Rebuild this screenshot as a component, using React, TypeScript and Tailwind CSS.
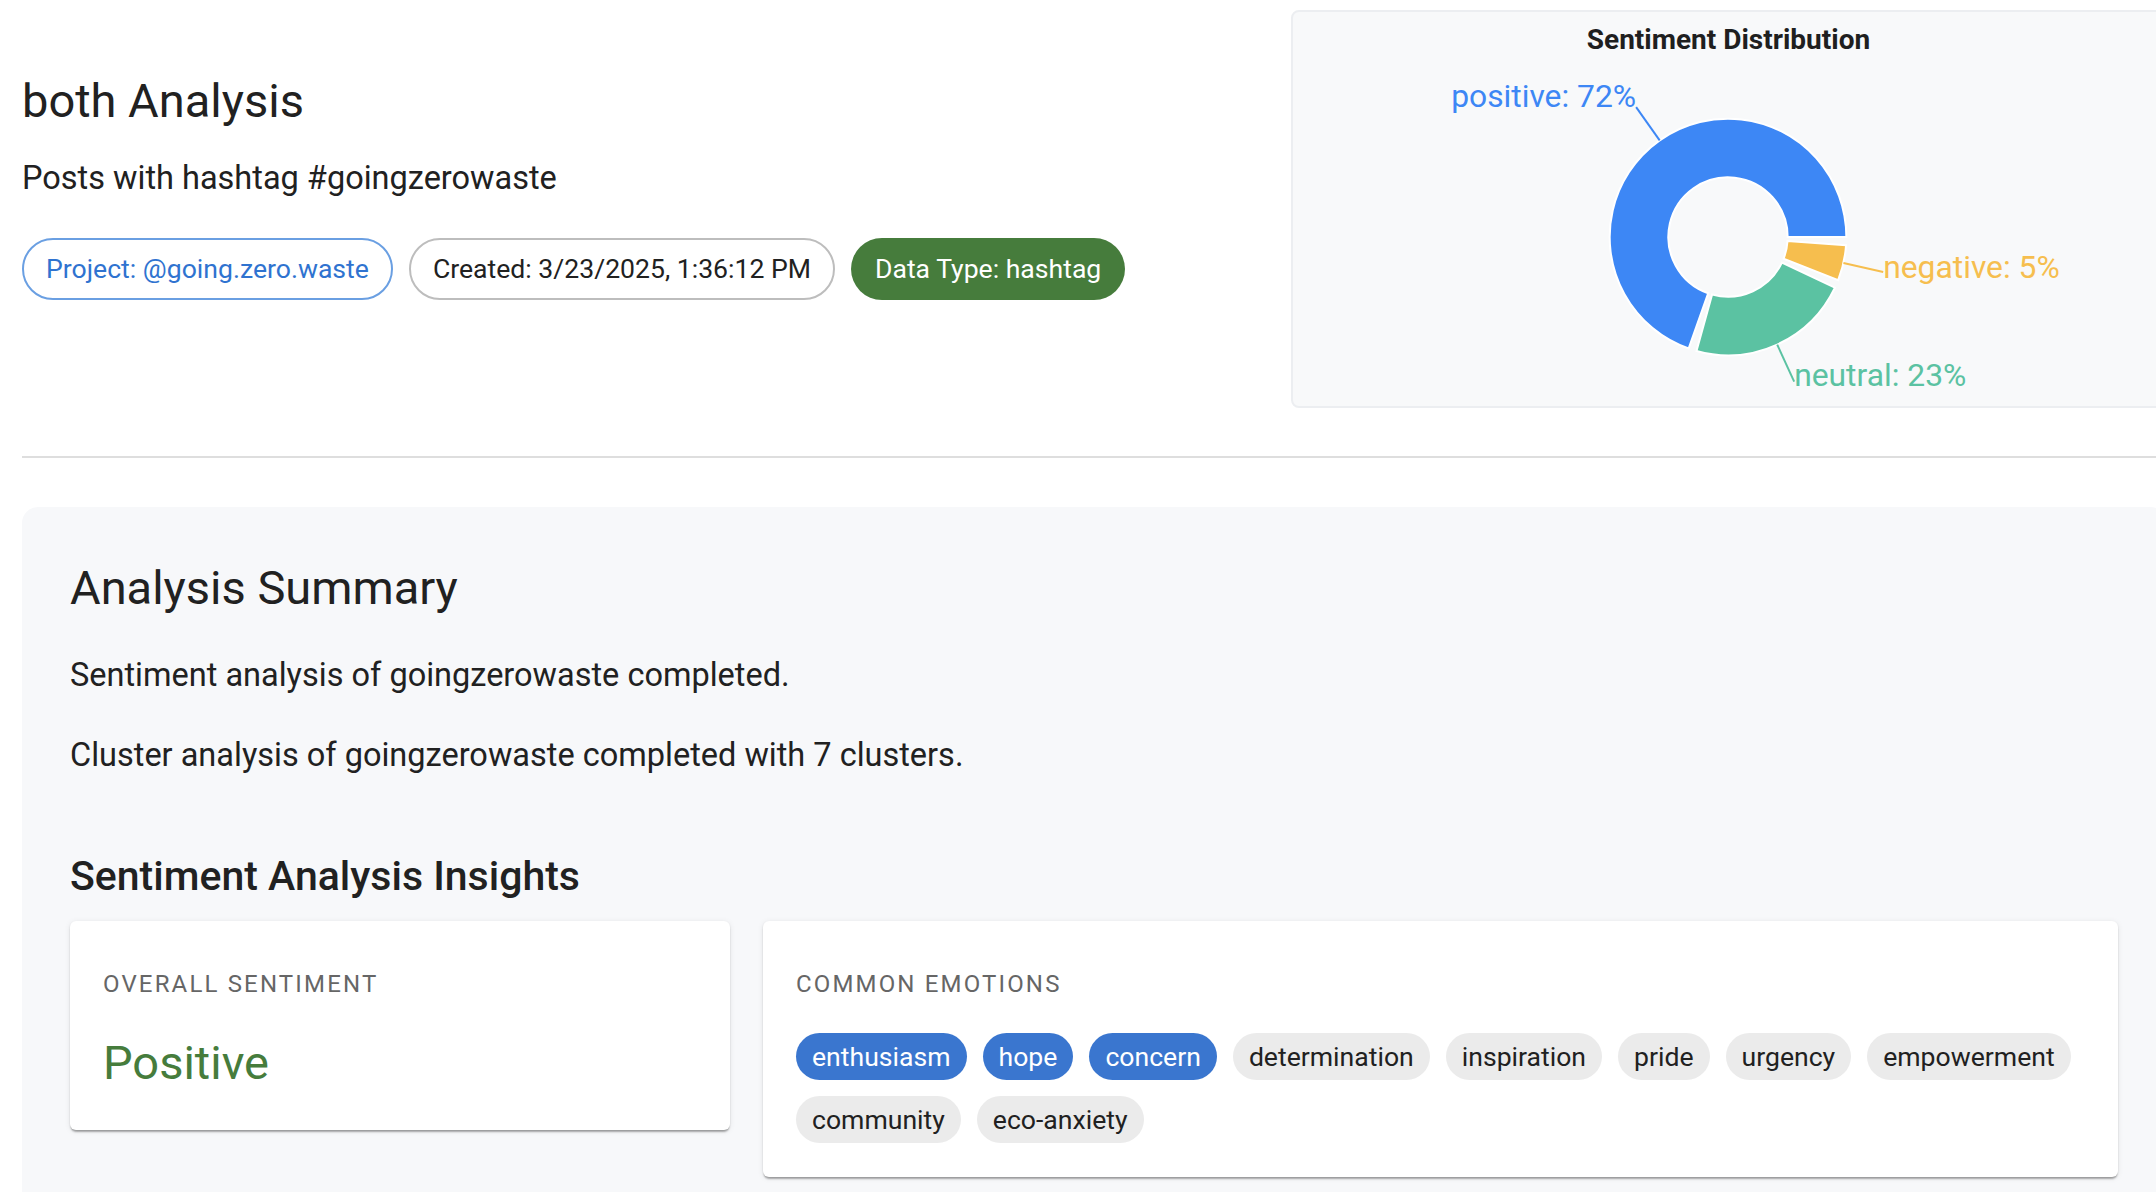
import React from 'react';

const data = [
  { name: 'positive', value: 72, color: '#3d87f5', dy: -11 },
  { name: 'neutral', value: 23, color: '#5bc2a2', dy: -7 },
  { name: 'negative', value: 5, color: '#f6be4e', dy: -5 },
];

const emotions = [
  { label: 'enthusiasm', top: true },
  { label: 'hope', top: true },
  { label: 'concern', top: true },
  { label: 'determination' },
  { label: 'inspiration' },
  { label: 'pride' },
  { label: 'urgency' },
  { label: 'empowerment' },
  { label: 'community' },
  { label: 'eco-anxiety' },
];

const CX = 437;
const CY = 180;
const OUTER = 119;
const INNER = 60;
const PAD = 4;

function pt(r: number, deg: number) {
  const a = (deg * Math.PI) / 180;
  return { x: CX + r * Math.cos(a), y: CY - r * Math.sin(a) };
}

function sectorPath(a1: number, a2: number) {
  const large = a2 - a1 > 180 ? 1 : 0;
  const o1 = pt(OUTER, a1);
  const o2 = pt(OUTER, a2);
  const i1 = pt(INNER, a1);
  const i2 = pt(INNER, a2);
  return `M${o1.x},${o1.y} A${OUTER},${OUTER} 0 ${large} 0 ${o2.x},${o2.y} L${i2.x},${i2.y} A${INNER},${INNER} 0 ${large} 1 ${i1.x},${i1.y} Z`;
}

function Donut() {
  const total = data.reduce((s, d) => s + d.value, 0);
  const usable = 360 - data.length * PAD;
  let start = 0;
  const sectors = data.map((d) => {
    const sweep = (d.value / total) * usable;
    const s = { ...d, a1: start, a2: start + sweep, mid: start + sweep / 2 };
    start += sweep + PAD;
    return s;
  });

  return (
    <svg width="875" height="350" viewBox="0 0 875 350">
      {sectors.map((s) => (
        <path key={s.name} d={sectorPath(s.a1, s.a2)} fill={s.color} stroke="#ffffff" strokeWidth={2} />
      ))}
      {sectors.map((s) => {
        const p1 = pt(OUTER, s.mid);
        const p2 = pt(OUTER + 41, s.mid);
        const anchor = p2.x > CX ? 'start' : 'end';
        return (
          <g key={s.name + '-label'}>
            <line x1={p1.x} y1={p1.y} x2={p2.x} y2={p2.y} stroke={s.color} strokeWidth={2} />
            <text
              x={p2.x}
              y={p2.y + s.dy}
              textAnchor={anchor}
              dominantBaseline="central"
              fill={s.color}
              fontSize={32}
              fontFamily="Roboto, sans-serif"
            >
              {`${s.name}: ${s.value}%`}
            </text>
          </g>
        );
      })}
    </svg>
  );
}

export default function App() {
  return (
    <div className="w-[2156px] h-[1192px] overflow-hidden bg-white font-['Roboto',sans-serif] text-[#212121]">
      <div className="ml-[22px] w-[2144px]">
        {/* header */}
        <div className="flex items-start">
          <div className="flex-1 pt-[72px]">
            <h1 className="text-[47px] leading-[58px] font-normal">both Analysis</h1>
            <p className="mt-[26px] text-[32.5px] leading-[44px]">Posts with hashtag #goingzerowaste</p>
            <div className="mt-[38px] flex items-center gap-[16px]">
              <span className="h-[62px] px-[22px] flex items-center rounded-full border-2 border-[#6a9fe2] text-[#2f73d0] text-[26.6px]">
                Project: @going.zero.waste
              </span>
              <span className="h-[62px] px-[22px] flex items-center rounded-full border-2 border-[#bdbdbd] text-[26.6px]">
                Created: 3/23/2025, 1:36:12 PM
              </span>
              <span className="h-[62px] px-[24px] flex items-center rounded-full bg-[#467c3c] text-white text-[26.6px]">
                Data Type: hashtag
              </span>
            </div>
          </div>
          <div className="mt-[10px] w-[875px] h-[398px] rounded-[8px] border-2 border-[#eceef1] bg-[#f8f9fa] flex flex-col items-center">
            <h2 className="pt-[10px] text-[28px] leading-[36px] font-bold text-[#1f1f1f]">Sentiment Distribution</h2>
            <Donut />
          </div>
        </div>

        <div className="mt-[48px] h-[2px] bg-[#dedede]" />

        {/* summary */}
        <div className="mt-[49px] rounded-[16px] bg-[#f7f8fa] px-[48px] pt-[49px] pb-[48px]">
          <h2 className="text-[47px] leading-[64px] font-normal">Analysis Summary</h2>
          <p className="mt-[31px] text-[32.5px] leading-[49px]">Sentiment analysis of goingzerowaste completed.</p>
          <p className="mt-[31px] text-[32.5px] leading-[49px]">Cluster analysis of goingzerowaste completed with 7 clusters.</p>

          <h3 className="mt-[63px] text-[41px] leading-[66px] font-medium">Sentiment Analysis Insights</h3>
          <div className="mt-[12px] flex items-start gap-[33px]">
            <div className="w-[660px] shrink-0 rounded-[6px] bg-white px-[33px] pt-[33px] pb-[38px] shadow-[0_3px_2px_-1px_rgba(0,0,0,0.28),0_1px_2px_0_rgba(0,0,0,0.12),0_1px_6px_0_rgba(0,0,0,0.08)]">
              <div className="text-[24px] leading-[60px] tracking-[0.09em] uppercase text-[#666666]">Overall Sentiment</div>
              <div className="mt-[20px] text-[47px] leading-[58px] text-[#467c3c]">Positive</div>
            </div>
            <div className="flex-1 rounded-[6px] bg-white px-[33px] pt-[33px] pb-[34px] shadow-[0_3px_2px_-1px_rgba(0,0,0,0.28),0_1px_2px_0_rgba(0,0,0,0.12),0_1px_6px_0_rgba(0,0,0,0.08)]">
              <div className="text-[24px] leading-[60px] tracking-[0.09em] uppercase text-[#666666]">Common Emotions</div>
              <div className="mt-[19px] flex flex-wrap gap-x-[16px] gap-y-[16px]">
                {emotions.map((e) => (
                  <span
                    key={e.label}
                    className={
                      e.top
                        ? 'h-[47px] px-[16px] flex items-center rounded-full bg-[#3a76cf] text-white text-[26.6px]'
                        : 'h-[47px] px-[16px] flex items-center rounded-full bg-[#ebebeb] text-[#212121] text-[26.6px]'
                    }
                  >
                    {e.label}
                  </span>
                ))}
              </div>
            </div>
          </div>
        </div>
      </div>
    </div>
  );
}
